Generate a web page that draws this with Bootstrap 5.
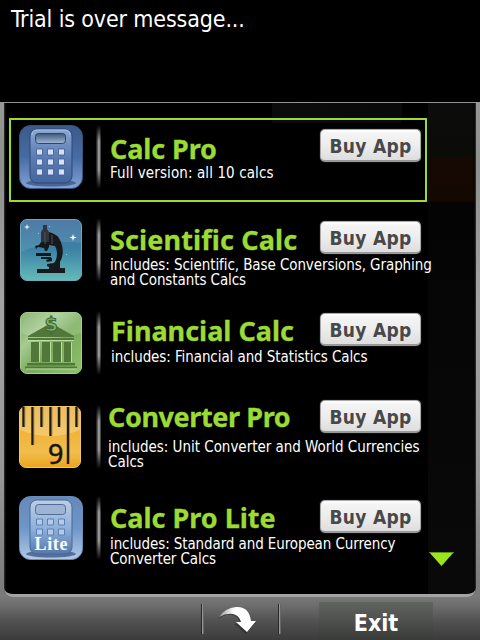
<!DOCTYPE html>
<html lang="en">
<head>
<meta charset="utf-8">
<meta name="viewport" content="width=device-width, initial-scale=1">
<title>Calc Pro</title>
<link href="https://cdn.jsdelivr.net/npm/bootstrap@5.3.0/dist/css/bootstrap.min.css" rel="stylesheet">
<style>
body{background:#000;color:#fff;font-family:"DejaVu Sans Condensed","DejaVu Sans",sans-serif;width:480px;height:640px}
.msg{height:102px;padding:6px 0 0 11px;font-size:23px;line-height:27px;letter-spacing:-.14px}
.frame{height:496px;background:linear-gradient(180deg,#969896 0,#8e908e 13%,#a2a4a2 40%,#969896 75%,#777977 100%)}
.screen{height:495px;margin:0 4px;border-top:1px solid #929292;border-bottom:3px solid #a3a3a3;border-radius:0 0 9px 9px;
 background:
 linear-gradient(90deg,#333 0,#000 2px,transparent 3px calc(100% - 3px),#000 calc(100% - 2px),#333 100%),
 linear-gradient(180deg,#0c0c0c 0,#0b0b08 54px,#160903 55px,#140803 98px,#040404 100px,#060706 300px,#080908 490px) 100% 0/48px 100% no-repeat,
 linear-gradient(90deg,#0b0b0b,#090909) 268px 0/130px 20px no-repeat,#000}
.app{display:flex;align-items:flex-start;height:var(--h);padding-left:15px;border:0}
.app.picked{border:2px solid #9bdb33;width:418px;margin:15px 0 0 5px;padding-left:8px}
.pic{width:64px;height:64px;flex:none;margin-top:var(--it)}
.rod{width:5px;height:64px;flex:none;margin:var(--it) 0 0 13px;background:linear-gradient(90deg,#111,#777 40%,#b5b5b5 60%,#222);-webkit-mask:linear-gradient(transparent,#000 25% 70%,transparent);mask:linear-gradient(transparent,#000 25% 70%,transparent)}
.info{margin-left:calc(var(--tx) + 1px);margin-top:var(--bt);width:330px;flex:none}
.line1{width:calc(311px + var(--dx));height:32px}
.name{font:700 27px/32px "Noto Sans",sans-serif;color:#9bdb33;white-space:nowrap;margin-top:var(--ty);letter-spacing:var(--ls,0px);-webkit-text-stroke:.3px #9bdb33}
.desc{font-size:15px;line-height:14.5px;white-space:nowrap;margin-top:var(--sy);letter-spacing:var(--ds,-.08px)}
.buy{width:101px;height:33px;flex:none;padding:0;border:1px solid #a8a8a8;border-bottom:2px solid #999;border-radius:5px;background:linear-gradient(#fff 0,#f4f4f4 12%,#ededed 50%,#dedede 100%);color:#484848;font-size:19px;line-height:32px;font-weight:700;letter-spacing:.3px;box-shadow:0 0 1px #999}
.bar{height:42px;background:linear-gradient(180deg,#777 0,#6c6d6c 18%,#525352 52%,#3a3b3a 100%)}
.sep{width:3px;height:30px;background:linear-gradient(90deg,#282828 0 1px,#979797 1px 2px,#666 2px)}
.exit{width:114px;font-size:23px;font-weight:700;line-height:42px;height:38px;background:linear-gradient(#626462,#393b39);}
.more{position:absolute;left:428px;top:551px}
</style>
<script src="https://cdn.jsdelivr.net/npm/bootstrap@5.3.0/dist/js/bootstrap.bundle.min.js"></script>
</head>
<body class="m-0 overflow-hidden position-relative">
<header class="msg">Trial is over message...</header>
<main class="frame">
<div class="screen">
 <section class="app picked" style="--h:84px;--it:5px;--bt:9px;--tx:8px;--dx:0px;--ty:4px;--sy:5px;--ls:-.1px;--ds:.1px">
  <svg class="pic" viewBox="0 0 64 64">
   <defs>
    <linearGradient id="cb" x1="0" y1="0" x2="0" y2="1"><stop stop-color="#3c5a8a"/><stop offset=".5" stop-color="#466ba4"/><stop offset="1" stop-color="#83a2d6"/></linearGradient>
    <linearGradient id="cc" x1="0" y1="0" x2="0" y2="1"><stop stop-color="#8ba8d2"/><stop offset=".5" stop-color="#5d7db4"/><stop offset="1" stop-color="#45659e"/></linearGradient>
    <linearGradient id="cd" x1="0" y1="0" x2="0" y2="1"><stop stop-color="#3d5878"/><stop offset="1" stop-color="#a2b8d8"/></linearGradient>
   </defs>
   <rect x=".5" y=".5" width="63" height="63" rx="11" fill="url(#cb)" stroke="#36547e"/>
   <ellipse cx="32" cy="58" rx="25" ry="3.5" fill="#344f80" opacity=".7"/>
   <rect x="11" y="4" width="42" height="54" rx="7" fill="url(#cc)" stroke="#2c4674"/>
   <path d="M13 10q0-5 5-5h28q5 0 5 5" fill="none" stroke="#a9c0e2"/>
   <rect x="16.500" y="8.500" width="30" height="10" rx="3" fill="url(#cd)" stroke="#2d4668"/>
   <g fill="#d3e0f7" stroke="#3f5c92" stroke-width=".8"><path d="M17.500 24h6v6h-6zM28.500 24h6v6h-6zM39.500 24h6v6h-6zM17.500 34h6v6h-6zM28.500 34h6v6h-6zM39.500 34h6v6h-6zM17.500 44h6v6h-6zM28.500 44h6v6h-6zM39.500 44h6v6h-6z"/></g>
  </svg>
  <div class="rod"></div>
  <div class="info"><div class="line1 d-flex justify-content-between"><div class="name">Calc Pro</div><button class="btn buy">Buy App</button></div><div class="desc">Full version: all 10 calcs</div></div>
 </section>
 <section class="app" style="--h:93px;--it:16px;--bt:19px;--tx:8px;--dx:0px;--ty:3px;--sy:5px;--ls:.13px">
  <svg class="pic" viewBox="0 0 64 64">
   <defs><linearGradient id="sb" x1="0" y1="0" x2="0" y2="1"><stop stop-color="#3a6b9c"/><stop offset=".5" stop-color="#3d83a6"/><stop offset="1" stop-color="#63bcb8"/></linearGradient></defs>
   <rect x="1.500" y="1.500" width="61" height="61" rx="6.500" fill="url(#sb)" stroke="#6ba9bd"/>
   <path d="M2 8q0-6 6-6h48q6 0 6 6v17Q33 21 2 34z" fill="#fff" opacity=".1"/>
   <path d="M8 6l.7 2.300L11 9l-2.300.7L8 12l-.7-2.300L5 9l2.300-.7zM54 16l.9 2.600 2.600.9-2.600.9L54 23l-.9-2.600-2.600-.9 2.600-.9z" fill="#e8f6ff"/><path d="M19 15h1v1h-1zM30 8h1v1h-1zM47 36h1v1h-1z" fill="#9bd0df"/>
   <path d="M24 7h4v4l2 3v13l-1 1h-6l-1-1V14l2-3z" fill="#30343c"/>
   <path d="M30 14q9 2 12 10 4 11-1 20v6h5v5H18v-4h12v-2l-2-1v-2l7-1q3-3 3-10 0-4-2-7l-6-1z" fill="#17191c"/>
   <path d="M22 24h8v5l-2 4h-2l-1-3-6-1-2 2-1-3 4-1zM17 35h15v3H17zM22 39h10v2H22zM27 42l6-2v3l-5 1z" fill="#14191c"/>
   <path d="M26 14v12M33 17v9" stroke="#50535a"/>
  </svg>
  <div class="rod"></div>
  <div class="info"><div class="line1 d-flex justify-content-between"><div class="name">Scientific Calc</div><button class="btn buy">Buy App</button></div><div class="desc">includes: Scientific, Base Conversions, Graphing<br>and Constants Calcs</div></div>
 </section>
 <section class="app" style="--h:93px;--it:16px;--bt:18px;--tx:9px;--dx:-1px;--ty:2px;--sy:5px">
  <svg class="pic" viewBox="0 0 64 64">
   <defs><linearGradient id="fb" x1="0" y1="0" x2="1" y2="1"><stop stop-color="#73a65a"/><stop offset=".3" stop-color="#a5cb91"/><stop offset=".55" stop-color="#79ac5b"/><stop offset="1" stop-color="#8fc06d"/></linearGradient></defs>
   <rect x="1.500" y="1.500" width="61" height="61" rx="6.500" fill="url(#fb)" stroke="#a7cc90"/>
   <path d="M2 8q0-6 6-6h48q6 0 6 6v14q-30 10-60 0z" fill="#fff" opacity=".16"/>
   <g fill="#51783a"><path d="M32 12L55 25v1H9v-1zM9 27h46v2H9zM12 31h8v20h-8zM23 31h8v20h-8zM34 31h8v20h-8zM45 31h7v20h-7zM8 52h48v2.500H8zM6 55.500h52v2H6z"/></g>
   <path d="M7 58h51M9 29.500h46M20.500 31v20M31.500 31v20M42.500 31v20M52.500 31v20" stroke="#c8e9ac" stroke-width=".8"/>
   <text x="32" y="20" text-anchor="middle" font-family="DejaVu Sans" font-weight="700" font-size="19" fill="#86b666" stroke="#3e652d" stroke-width="1">$</text>
  </svg>
  <div class="rod"></div>
  <div class="info"><div class="line1 d-flex justify-content-between"><div class="name">Financial Calc</div><button class="btn buy">Buy App</button></div><div class="desc">includes: Financial and Statistics Calcs</div></div>
 </section>
 <section class="app" style="--h:92px;--it:17px;--bt:12px;--tx:6px;--dx:2px;--ty:1px;--sy:8px;--ls:-.4px;--ds:-.02px">
  <svg class="pic" viewBox="0 0 64 64">
   <defs><linearGradient id="yb" x1="0" y1="0" x2="0" y2="1"><stop stop-color="#e1a62f"/><stop offset=".45" stop-color="#f0b53a"/><stop offset=".75" stop-color="#f1bd4d"/><stop offset="1" stop-color="#eca51c"/></linearGradient></defs>
   <rect x=".5" y="1.500" width="61" height="61" rx="6.500" fill="url(#yb)" stroke="#f3c565"/>
   <path d="M1 8q0-6 6-6h48q6 0 6 6v17Q31 37 1 25z" fill="#fff" opacity=".25"/>
   <path d="M4.500 2v20M13.500 2v38M22.500 2v20M31.500 2v29M40 2v20M49 2v57M57.500 2v20" stroke="#1d1a16" stroke-width="2.400"/>
   <path d="M6 2v19M15 2v37M24 2v19M33 2v28M41.500 2v19M50.500 2v56M59 2v19" stroke="#a6812c" stroke-width=".7"/>
   <text x="29" y="59" font-family="Noto Sans" font-size="27" fill="#17140e" stroke="#17140e" stroke-width=".5">9</text>
  </svg>
  <div class="rod"></div>
  <div class="info"><div class="line1 d-flex justify-content-between"><div class="name">Converter Pro</div><button class="btn buy">Buy App</button></div><div class="desc">includes: Unit Converter and World Currencies<br>Calcs</div></div>
 </section>
 <section class="app" style="--h:100px;--it:16px;--bt:20px;--tx:8px;--dx:0px;--ty:2px;--sy:5px;--ds:-.1px">
  <svg class="pic" viewBox="0 0 64 64">
   <defs>
    <linearGradient id="lb" x1="0" y1="0" x2="0" y2="1"><stop stop-color="#6689b8"/><stop offset=".5" stop-color="#6d96c9"/><stop offset="1" stop-color="#b3c8e7"/></linearGradient>
    <linearGradient id="lc" x1="0" y1="0" x2="0" y2="1"><stop stop-color="#bdcee6"/><stop offset=".55" stop-color="#8daeda"/><stop offset="1" stop-color="#5578ab"/></linearGradient>
   </defs>
   <rect x=".5" y=".5" width="63" height="63" rx="11" fill="url(#lb)" stroke="#6b8eb9"/>
   <ellipse cx="32" cy="58" rx="25" ry="3.500" fill="#3e5b87" opacity=".8"/>
   <rect x="11" y="4" width="42" height="54" rx="7" fill="url(#lc)" stroke="#496892"/>
   <rect x="16.500" y="8.500" width="30" height="10" rx="3" fill="#9eb4d4" stroke="#506d96"/>
   <path d="M17.500 23h6v6h-6zM28.500 23h6v6h-6zM39.500 23h6v6h-6zM17.500 33h6v6h-6zM28.500 33h6v6h-6zM39.500 33h6v6h-6z" fill="#b5caeb" stroke="#5f7fae"/>
   <text x="15.500" y="54" font-family="Liberation Serif" font-weight="700" font-size="18" textLength="33" fill="#fff">Lite</text>
  </svg>
  <div class="rod"></div>
  <div class="info"><div class="line1 d-flex justify-content-between"><div class="name">Calc Pro Lite</div><button class="btn buy">Buy App</button></div><div class="desc">includes: Standard and European Currency<br>Converter Calcs</div></div>
 </section>
</div>
</main>
<footer class="bar d-flex align-items-center">
 <div class="sep" style="margin-left:201px"></div>
 <svg width="40" height="34" viewBox="0 0 40 34" style="margin:6px 15px 0 14px">
  <defs><linearGradient id="ar" x1="0" x2="1"><stop stop-color="#999"/><stop offset=".4" stop-color="#fff"/></linearGradient></defs>
  <path d="M1 13Q7 3 18 2Q31 1 34 15L39 16L29 28L17 18L23 17Q21 10 15 9Q8 8 1 13z" fill="#222" opacity=".5" transform="translate(-1 1)"/>
  <path d="M1 12Q7 3 18 2Q31 1 33 16L38 16L29 27L18 17L23 17Q21 10 15 9Q8 8 1 12z" fill="url(#ar)"/>
 </svg>
 <div class="sep" style="margin-left:5px"></div>
 <div class="exit text-center align-self-end" style="margin-left:38px">Exit</div>
</footer>
<svg class="more" width="27" height="17" viewBox="0 0 27 17"><path d="M1 1h25L13.500 15z" fill="#9be51d"/><path d="M2 1.500h23" stroke="#5f9410"/></svg>
</body>
</html>
